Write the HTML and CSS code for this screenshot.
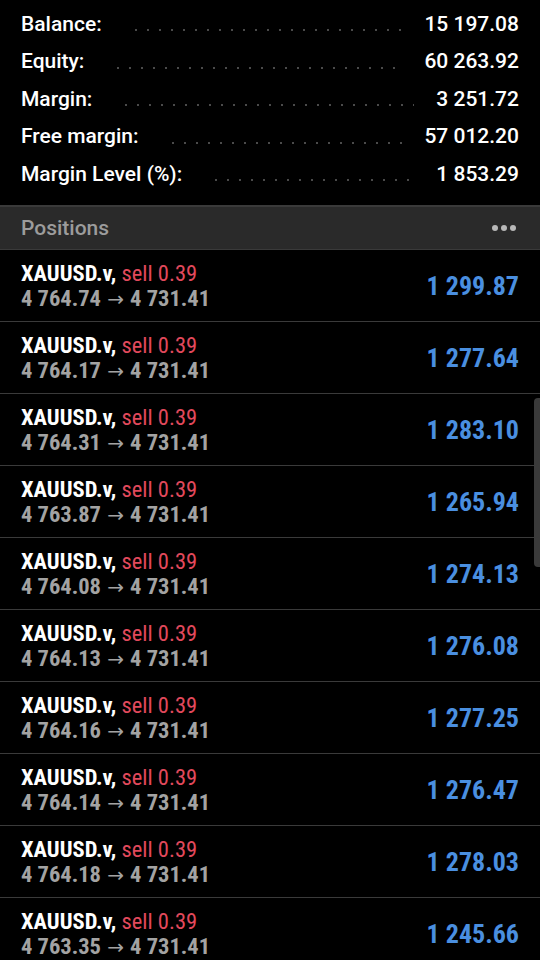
FILE: index.html
```html
<!doctype html>
<html lang="en">
  <head>
    <meta charset="UTF-8" />
    <meta name="viewport" content="width=device-width, initial-scale=1.0" />
    <title>Trade</title>
    <link rel="stylesheet" href="styles.css">
  </head>
  <body>
    <div class="summary">
      <div class="summary-row"><span class="label">Balance:</span><span class="leader"></span><span class="amount">15 197.08</span></div>
      <div class="summary-row"><span class="label">Equity:</span><span class="leader"></span><span class="amount">60 263.92</span></div>
      <div class="summary-row"><span class="label">Margin:</span><span class="leader"></span><span class="amount">3 251.72</span></div>
      <div class="summary-row"><span class="label">Free margin:</span><span class="leader"></span><span class="amount">57 012.20</span></div>
      <div class="summary-row"><span class="label">Margin Level (%):</span><span class="leader"></span><span class="amount">1 853.29</span></div>
    </div>

    <div class="section-header">
      <span>Positions</span>
      <span class="more"><i></i><i></i><i></i></span>
    </div>

    <div class="positions">
      <div class="position">
        <div class="info">
          <div class="title">XAUUSD.v, <span class="sell">sell 0.39</span></div>
          <div class="prices">4 764.74 <span class="arrow">&rarr;</span> 4 731.41</div>
        </div>
        <div class="profit">1 299.87</div>
      </div>
      <div class="position">
        <div class="info">
          <div class="title">XAUUSD.v, <span class="sell">sell 0.39</span></div>
          <div class="prices">4 764.17 <span class="arrow">&rarr;</span> 4 731.41</div>
        </div>
        <div class="profit">1 277.64</div>
      </div>
      <div class="position">
        <div class="info">
          <div class="title">XAUUSD.v, <span class="sell">sell 0.39</span></div>
          <div class="prices">4 764.31 <span class="arrow">&rarr;</span> 4 731.41</div>
        </div>
        <div class="profit">1 283.10</div>
      </div>
      <div class="position">
        <div class="info">
          <div class="title">XAUUSD.v, <span class="sell">sell 0.39</span></div>
          <div class="prices">4 763.87 <span class="arrow">&rarr;</span> 4 731.41</div>
        </div>
        <div class="profit">1 265.94</div>
      </div>
      <div class="position">
        <div class="info">
          <div class="title">XAUUSD.v, <span class="sell">sell 0.39</span></div>
          <div class="prices">4 764.08 <span class="arrow">&rarr;</span> 4 731.41</div>
        </div>
        <div class="profit">1 274.13</div>
      </div>
      <div class="position">
        <div class="info">
          <div class="title">XAUUSD.v, <span class="sell">sell 0.39</span></div>
          <div class="prices">4 764.13 <span class="arrow">&rarr;</span> 4 731.41</div>
        </div>
        <div class="profit">1 276.08</div>
      </div>
      <div class="position">
        <div class="info">
          <div class="title">XAUUSD.v, <span class="sell">sell 0.39</span></div>
          <div class="prices">4 764.16 <span class="arrow">&rarr;</span> 4 731.41</div>
        </div>
        <div class="profit">1 277.25</div>
      </div>
      <div class="position">
        <div class="info">
          <div class="title">XAUUSD.v, <span class="sell">sell 0.39</span></div>
          <div class="prices">4 764.14 <span class="arrow">&rarr;</span> 4 731.41</div>
        </div>
        <div class="profit">1 276.47</div>
      </div>
      <div class="position">
        <div class="info">
          <div class="title">XAUUSD.v, <span class="sell">sell 0.39</span></div>
          <div class="prices">4 764.18 <span class="arrow">&rarr;</span> 4 731.41</div>
        </div>
        <div class="profit">1 278.03</div>
      </div>
      <div class="position">
        <div class="info">
          <div class="title">XAUUSD.v, <span class="sell">sell 0.39</span></div>
          <div class="prices">4 763.35 <span class="arrow">&rarr;</span> 4 731.41</div>
        </div>
        <div class="profit">1 245.66</div>
      </div>
      <div class="scrollbar"></div>
    </div>
  </body>
</html>
```

FILE: styles.css
```css
body {
  margin: 0;
  background-color: #000;
  color: #fff;
  font-family: Roboto, "Liberation Sans", sans-serif;
  height: 960px;
  overflow: hidden;
}

.summary {
  padding: 5px 21px 12px 21px;
}

.summary-row {
  display: flex;
  align-items: center;
  height: 37.5px;
  font-size: 21px;
  font-weight: 500;
}

.leader {
  flex: 1;
  align-self: stretch;
  margin: 0 22px 0 28px;
  background-image: radial-gradient(circle, #4a4a4a 1px, transparent 1.4px);
  background-size: 12px 4px;
  background-repeat: repeat-x;
  background-position: left 23px;
}

.section-header {
  display: flex;
  align-items: center;
  justify-content: space-between;
  height: 42px;
  padding: 0 21px;
  background-color: #2a2a2a;
  border-top: 2px solid #3a3a3a;
  border-bottom: 1px solid #3a3a3a;
  color: #9c9c9c;
  font-size: 21px;
  font-weight: 500;
}

.more {
  display: flex;
  gap: 3px;
  padding-right: 3px;
}

.more i {
  width: 6px;
  height: 6px;
  border-radius: 50%;
  background-color: #b8b8b8;
}

.positions {
  position: relative;
}

.position {
  display: flex;
  align-items: center;
  justify-content: space-between;
  height: 71px;
  padding: 2px 21px 0 21px;
  box-sizing: border-box;
  height: 72px;
  border-bottom: 1px solid #3a3a3a;
  font-family: "Roboto Condensed", "Liberation Sans Narrow", Roboto, sans-serif;
}

.title {
  font-size: 22.5px;
  font-weight: 700;
  line-height: 25px;
}

.sell {
  color: #e2495c;
  font-weight: 400;
}

.prices {
  color: #a3a3a3;
  font-size: 22.5px;
  font-weight: 700;
  line-height: 25px;
}

.arrow {
  font-family: "DejaVu Sans", sans-serif;
  font-weight: 400;
  font-size: 20px;
  margin: 0 1px;
}

.profit {
  color: #4a8fe0;
  font-size: 26px;
  font-weight: 700;
}

.scrollbar {
  position: absolute;
  right: 0;
  top: 148px;
  width: 6px;
  height: 169px;
  background-color: #3a3a3a;
  border-radius: 4px 0 0 4px;
}
```
